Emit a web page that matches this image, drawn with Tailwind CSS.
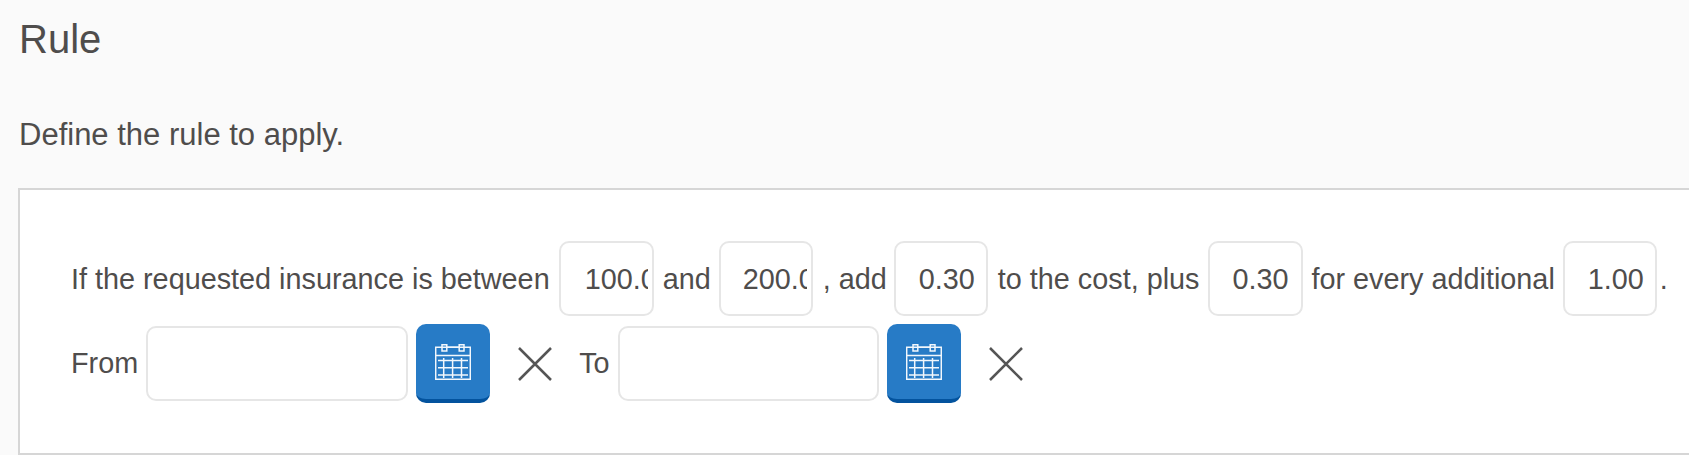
<!DOCTYPE html>
<html><head><script src="https://cdn.jsdelivr.net/npm/@tailwindcss/browser@4"></script></head>
<body class="m-0 w-[1689px] h-[455px] overflow-hidden bg-[#fafafa] font-['Liberation_Sans',Arial,sans-serif] text-[#4f4d4c]">
<div class="pl-[19px] pt-[15px]">
<h1 class="text-[40px] leading-[48px] font-normal">Rule</h1>
<p class="mt-[52px] text-[31px] leading-[40px]">Define the rule to apply.</p>
</div>
<div class="ml-[18px] mt-[33px] h-[267px] border-2 border-r-0 border-[#d6d6d6] bg-white pl-[51px] pt-[51px] text-[28.8px]">
<div class="flex items-center h-[75px] whitespace-nowrap">
<span class="pt-[2px]">If the requested insurance is between</span>
<input value="100.00" class="ml-[9px] w-[95px] h-[75px] border-2 border-[#e6e6e6] rounded-[10px] pl-[24px] pr-[4px] pt-[2px] outline-none bg-white">
<span class="ml-[9px] pt-[2px]">and</span>
<input value="200.00" class="ml-[8px] w-[94px] h-[75px] border-2 border-[#e6e6e6] rounded-[10px] pl-[22px] pr-[4px] pt-[2px] outline-none bg-white">
<span class="ml-[10px] pt-[2px]">, add</span>
<input value="0.30" class="ml-[7px] w-[94px] h-[75px] border-2 border-[#e6e6e6] rounded-[10px] pl-[23px] pr-[4px] pt-[2px] outline-none bg-white">
<span class="ml-[10px] pt-[2px]">to the cost, plus</span>
<input value="0.30" class="ml-[9px] w-[95px] h-[75px] border-2 border-[#e6e6e6] rounded-[10px] pl-[22px] pr-[4px] pt-[2px] outline-none bg-white">
<span class="ml-[8px] pt-[2px]">for every additional</span>
<input value="1.00" class="ml-[8px] w-[94px] h-[75px] border-2 border-[#e6e6e6] rounded-[10px] pl-[23px] pr-[4px] pt-[2px] outline-none bg-white">
<span class="ml-[3px] pt-[2px]">.</span>
</div>
<div class="flex items-center h-[75px] mt-[10px] whitespace-nowrap">
<span>From</span>
<input class="ml-[8px] w-[262px] h-[75px] border-2 border-[#e6e6e6] rounded-[10px] outline-none bg-white">
<button class="ml-[8px] w-[74px] h-[79px] rounded-[10px] bg-[#277bc6] border-b-4 border-[#03539e] flex items-center justify-center"><svg width="36" height="36" viewBox="0 0 36 36" fill="none" stroke="#f2f7fc" stroke-width="1.5"><path d="M.7 35.3V3.2h34.6v32.1zM.7 11.5h34.6"/><path d="M7 .7h4.8v6.2H7zM24.2 .7H29v6.2h-4.8zM11.8 3.2h12.4M3 16.5h30M3 23.7h30M3 31h30M8.7 14v20M17.6 14v20M26.5 14v20"/></svg></button>
<svg class="ml-[27px] shrink-0" width="36" height="36" viewBox="0 0 36 36" stroke="#555" stroke-width="2.5"><path d="M2 2l32 32M34 2L2 34"/></svg>
<span class="ml-[26px]">To</span>
<input class="ml-[8px] w-[261px] h-[75px] border-2 border-[#e6e6e6] rounded-[10px] outline-none bg-white">
<button class="ml-[8px] w-[74px] h-[79px] rounded-[10px] bg-[#277bc6] border-b-4 border-[#03539e] flex items-center justify-center"><svg width="36" height="36" viewBox="0 0 36 36" fill="none" stroke="#f2f7fc" stroke-width="1.5"><path d="M.7 35.3V3.2h34.6v32.1zM.7 11.5h34.6"/><path d="M7 .7h4.8v6.2H7zM24.2 .7H29v6.2h-4.8zM11.8 3.2h12.4M3 16.5h30M3 23.7h30M3 31h30M8.7 14v20M17.6 14v20M26.5 14v20"/></svg></button>
<svg class="ml-[27px] shrink-0" width="36" height="36" viewBox="0 0 36 36" stroke="#555" stroke-width="2.5"><path d="M2 2l32 32M34 2L2 34"/></svg>
</div>
</div>
</body></html>
